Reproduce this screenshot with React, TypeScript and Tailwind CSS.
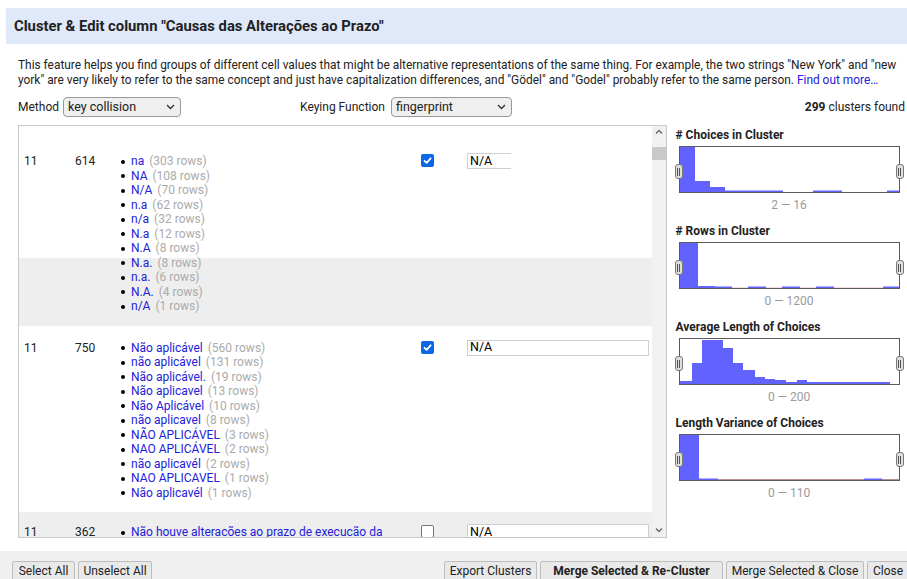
import React from "react";

type Choice = { value: string; rows?: number };
type Cluster = { size: number; rowCount: number; choices: Choice[]; checked: boolean; newValue: string };

const clusters: Cluster[] = [
  {
    size: 11,
    rowCount: 614,
    checked: true,
    newValue: "N/A",
    choices: [
      { value: "na", rows: 303 },
      { value: "NA", rows: 108 },
      { value: "N/A", rows: 70 },
      { value: "n.a", rows: 62 },
      { value: "n/a", rows: 32 },
      { value: "N.a", rows: 12 },
      { value: "N.A", rows: 8 },
      { value: "N.a.", rows: 8 },
      { value: "n.a.", rows: 6 },
      { value: "N.A.", rows: 4 },
      { value: "n/A", rows: 1 },
    ],
  },
  {
    size: 11,
    rowCount: 750,
    checked: true,
    newValue: "N/A",
    choices: [
      { value: "Não aplicável", rows: 560 },
      { value: "não aplicável", rows: 131 },
      { value: "Não aplicável.", rows: 19 },
      { value: "Não aplicavel", rows: 13 },
      { value: "Não Aplicável", rows: 10 },
      { value: "não aplicavel", rows: 8 },
      { value: "NÃO APLICÁVEL", rows: 3 },
      { value: "NAO APLICÁVEL", rows: 2 },
      { value: "não aplicavél", rows: 2 },
      { value: "NAO APLICAVEL", rows: 1 },
      { value: "Não aplicavél", rows: 1 },
    ],
  },
  {
    size: 11,
    rowCount: 362,
    checked: false,
    newValue: "N/A",
    choices: [{ value: "Não houve alteracões ao prazo de execucão da" }],
  },
];

// [x0, x1, height] inside a 219x45 plot area
type Bar = [number, number, number];

const histograms: { title: string; range: string; baseline?: string; bars: Bar[] }[] = [
  {
    title: "# Choices in Cluster",
    range: "2 — 16",
    bars: [
      [0, 15, 45],
      [15, 30, 11],
      [30, 45, 5],
      [45, 103, 1.5],
      [133, 162, 1.5],
      [207, 219, 1.5],
    ],
  },
  {
    title: "# Rows in Cluster",
    range: "0 — 1200",
    baseline: "#f6dede",
    bars: [
      [0, 18, 45],
      [18, 35, 2],
      [35, 52, 1.5],
      [68, 86, 1.5],
      [102, 120, 1.5],
      [136, 154, 1.5],
      [203, 219, 1.5],
    ],
  },
  {
    title: "Average Length of Choices",
    range: "0 — 200",
    bars: [
      [0, 12, 3],
      [12, 22, 21],
      [22, 32, 44],
      [32, 43, 44],
      [43, 53, 36],
      [53, 63, 21],
      [63, 75, 14],
      [75, 85, 7],
      [85, 95, 5],
      [95, 106, 4],
      [106, 117, 2],
      [117, 127, 4],
      [127, 210, 2],
    ],
  },
  {
    title: "Length Variance of Choices",
    range: "0 — 110",
    baseline: "#b89090",
    bars: [
      [0, 19, 45],
      [19, 38, 1.5],
      [184, 202, 1.5],
    ],
  },
];

function Select({ value, className }: { value: string; className: string }) {
  return (
    <div
      className={`flex h-[20px] items-center justify-between rounded-[4px] border border-[#9a9a9a] bg-[#efefef] pl-[4px] pr-[5px] text-[12.5px] ${className}`}
    >
      <span>{value}</span>
      <svg width="9" height="6" viewBox="0 0 9 6">
        <path d="M1 1 L4.5 4.5 L8 1" fill="none" stroke="#333" strokeWidth="1.4" />
      </svg>
    </div>
  );
}

function Checkbox({ checked }: { checked: boolean }) {
  if (!checked) {
    return <span className="ml-[1px] block h-[13px] w-[13px] rounded-[2px] border border-[#767676] bg-white" />;
  }
  return (
    <span className="ml-[1px] flex h-[13px] w-[13px] items-center justify-center rounded-[2px] bg-[#0b67e6]">
      <svg width="11" height="11" viewBox="0 0 11 11">
        <path d="M2.5 5.8 L4.6 7.8 L8.6 3.3" fill="none" stroke="#fff" strokeWidth="1.8" strokeLinecap="round" strokeLinejoin="round" />
      </svg>
    </span>
  );
}

function ClusterRow({ cluster, index }: { cluster: Cluster; index: number }) {
  const bg =
    index === 0
      ? "bg-[linear-gradient(to_bottom,#ffffff_132px,#eeeeee_132px)] pt-[28px] pb-[12px]"
      : index === 1
        ? "bg-white pt-[15px] pb-[12px]"
        : "bg-[#eeeeee] pt-[13px] pb-[13px]";
  return (
    <div className={`grid grid-cols-[51px_46px_304px_46px_1fr] ${bg}`}>
      <div className="pl-[5px]">{cluster.size}</div>
      <div className="pl-[5px]">{cluster.rowCount}</div>
      <ul className="pl-[5px]">
        {cluster.choices.map((c) => (
          <li key={c.value} className="flex items-start">
            <span className="mt-[5.5px] mr-[6px] h-[4px] w-[4px] shrink-0 rounded-full bg-black" />
            <span className="whitespace-nowrap">
              <span className="text-[#2121d9]">{c.value}</span>
              {c.rows !== undefined && <span className="ml-[5px] text-[#ababab]">({c.rows} rows)</span>}
            </span>
          </li>
        ))}
      </ul>
      <div>
        <Checkbox checked={cluster.checked} />
      </div>
      <div>
        <div
          className={`ml-[1px] mt-[-1px] flex h-[16px] items-center border border-[#cfcfcf] bg-white pl-[2px] text-[12.5px] text-black ${
            index === 0 ? "w-[44px] border-r-0" : "w-[182px]"
          }`}
        >
          {cluster.newValue}
        </div>
      </div>
    </div>
  );
}

function Histogram({ bars, baseline }: { bars: Bar[]; baseline?: string }) {
  return (
    <div className="relative h-[47px] w-[221px] border border-[#5a5a5a] bg-white">
      <svg width="219" height="45" viewBox="0 0 219 45" className="block">
        {baseline && <line x1="0" y1="44.5" x2="219" y2="44.5" stroke={baseline} strokeWidth="1" />}
        {bars.map(([x0, x1, h], i) => (
          <rect key={i} x={x0} y={45 - h} width={x1 - x0} height={h} fill="#6262ff" />
        ))}
      </svg>
      <span className="absolute left-[-5px] top-[17px] flex h-[15px] w-[8px] items-center justify-center gap-[1px] rounded-[3px] border border-[#7a7a7a] bg-[#dedede]">
        <span className="h-[8px] w-[1px] bg-[#555]" />
        <span className="h-[8px] w-[1px] bg-[#555]" />
      </span>
      <span className="absolute right-[-5px] top-[17px] flex h-[15px] w-[8px] items-center justify-center gap-[1px] rounded-[3px] border border-[#7a7a7a] bg-[#dedede]">
        <span className="h-[8px] w-[1px] bg-[#555]" />
        <span className="h-[8px] w-[1px] bg-[#555]" />
      </span>
    </div>
  );
}

function Button({ label, className, bold }: { label: string; className: string; bold?: boolean }) {
  return (
    <button
      className={`h-[20px] rounded-[2px] border border-[#bdbdbd] bg-[#e9e9e9] text-center text-[12px] leading-[18px] text-[#222] ${
        bold ? "font-bold" : ""
      } ${className}`}
    >
      {label}
    </button>
  );
}

export default function App() {
  return (
    <div className="h-[579px] w-[907px] overflow-hidden bg-white pt-[8px] text-[#222] [font-family:Roboto,'Liberation_Sans',sans-serif]">
      {/* dialog title */}
      <div className="ml-[6px] flex h-[36px] items-center bg-[#dfe9fa] pl-[8px] text-[14.8px] font-bold">
        Cluster &amp; Edit column "Causas das Alterações ao Prazo"
      </div>

      <div className="pl-[18px] pr-[2px]">
        <p className="mt-[14px] whitespace-nowrap text-[11.9px] leading-[15px]">
          This feature helps you find groups of different cell values that might be alternative representations of the
          same thing. For example, the two strings "New York" and "new
          <br />
          york" are very likely to refer to the same concept and just have capitalization differences, and "Gödel" and
          "Godel" probably refer to the same person. <span className="text-[#2121d9]">Find out more…</span>
        </p>

        {/* method / keying function controls */}
        <div className="mt-[9px] flex h-[20px] items-center text-[12px]">
          <div className="flex w-[282px] items-center gap-[4px]">
            <span>Method</span>
            <Select value="key collision" className="w-[118px]" />
          </div>
          <div className="flex items-center gap-[6px]">
            <span>Keying Function</span>
            <Select value="fingerprint" className="w-[121px]" />
          </div>
          <div className="ml-auto">
            <span className="font-bold">299</span> clusters found
          </div>
        </div>

        <div className="mt-[8px] flex h-[413px]">
          {/* cluster table */}
          <div className="flex w-[650px] border border-[#c8c8c8]">
            <div className="flex-1 overflow-hidden text-[12px] leading-[14.5px]">
              {clusters.map((c, i) => (
                <ClusterRow key={c.rowCount} cluster={c} index={i} />
              ))}
            </div>
            <div className="flex w-[14px] flex-col items-center bg-[#f1f1f1]">
              <div className="flex h-[12px] items-center">
                <svg width="8" height="6" viewBox="0 0 8 6">
                  <path d="M1 4.5 L4 1.5 L7 4.5" fill="none" stroke="#666" strokeWidth="1.3" />
                </svg>
              </div>
              <div className="mt-[9px] h-[13px] w-full bg-[#c9c9c9]" />
              <div className="mt-auto flex h-[14px] items-center">
                <svg width="8" height="6" viewBox="0 0 8 6">
                  <path d="M1 1.5 L4 4.5 L7 1.5" fill="none" stroke="#666" strokeWidth="1.3" />
                </svg>
              </div>
            </div>
          </div>

          {/* facet histograms */}
          <div className="ml-[9px] flex w-[230px] flex-col gap-[12px] pt-[3px]">
            {histograms.map((h) => (
              <div key={h.title}>
                <div className="text-[12px] font-bold leading-[14px]">{h.title}</div>
                <div className="ml-[3px] mt-[4px] w-[221px]">
                  <Histogram bars={h.bars} baseline={h.baseline} />
                  <div className="mt-[5px] text-center text-[12px] leading-[14px] text-[#9a9a9a]">{h.range}</div>
                </div>
              </div>
            ))}
          </div>
        </div>
      </div>

      {/* footer buttons */}
      <div className="mt-[13px] flex h-[28px] bg-[#f0f0f0] pt-[10px]">
        <div className="flex gap-[3px] pl-[12px]">
          <Button label="Select All" className="w-[63px]" />
          <Button label="Unselect All" className="w-[74px]" />
        </div>
        <div className="ml-auto mr-[-2px] flex gap-[3px]">
          <Button label="Export Clusters" className="w-[93px]" />
          <Button label="Merge Selected & Re-Cluster" className="w-[183px]" bold />
          <Button label="Merge Selected & Close" className="w-[138px]" />
          <Button label="Close" className="w-[42px]" />
        </div>
      </div>
    </div>
  );
}
